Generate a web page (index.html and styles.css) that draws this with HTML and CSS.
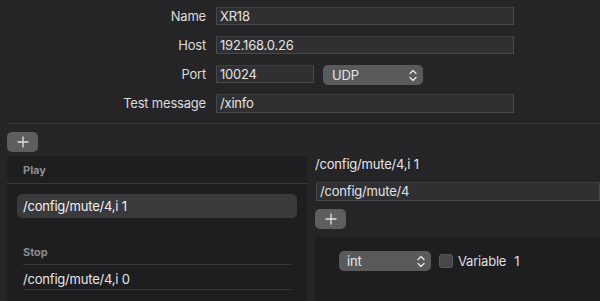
FILE: index.html
```html
<!DOCTYPE html>
<html>
<head>
<meta charset="utf-8">
<link rel="stylesheet" href="styles.css">
</head>
<body>
<div class="form">
  <label class="lbl">Name</label>
  <div class="field wide">XR18</div>
  <label class="lbl">Host</label>
  <div class="field wide">192.168.0.26</div>
  <label class="lbl">Port</label>
  <div class="port-row">
    <div class="field port">10024</div>
    <div class="popup udp"><span>UDP</span><svg class="chev" width="8" height="13" viewBox="0 0 8 13"><path d="M1 4.5 L4 1.5 L7 4.5 M1 8.5 L4 11.5 L7 8.5" fill="none" stroke="#e6e6e6" stroke-width="1.3" stroke-linecap="round" stroke-linejoin="round"/></svg></div>
  </div>
  <label class="lbl">Test message</label>
  <div class="field wide">/xinfo</div>
</div>
<div class="sep"></div>
<div class="add-wrap"><button class="add"><svg width="12" height="12" viewBox="0 0 12 12"><path d="M6 0.5 V11.5 M0.5 6 H11.5" stroke="#e2e2e2" stroke-width="1.3"/></svg></button></div>
<div class="main">
  <div class="list">
    <div class="head first">Play</div>
    <div class="row selected">/config/mute/4,i 1</div>
    <div class="head second">Stop</div>
    <div class="row plain">/config/mute/4,i 0</div>
  </div>
  <div class="detail">
    <div class="title">/config/mute/4,i 1</div>
    <div class="field addr">/config/mute/4</div>
    <div class="add-wrap2"><button class="add"><svg width="12" height="12" viewBox="0 0 12 12"><path d="M6 0.5 V11.5 M0.5 6 H11.5" stroke="#e2e2e2" stroke-width="1.3"/></svg></button></div>
    <div class="args">
      <div class="arg">
        <div class="popup int"><span>int</span><svg class="chev" width="8" height="13" viewBox="0 0 8 13"><path d="M1 4.5 L4 1.5 L7 4.5 M1 8.5 L4 11.5 L7 8.5" fill="none" stroke="#e6e6e6" stroke-width="1.3" stroke-linecap="round" stroke-linejoin="round"/></svg></div>
        <span class="check"></span>
        <span class="var">Variable</span>
        <span class="val">1</span>
      </div>
    </div>
  </div>
</div>
</body>
</html>
```
FILE: styles.css
```css
* { box-sizing: border-box; }
html, body { margin: 0; padding: 0; }
body {
  width: 600px;
  height: 301px;
  overflow: hidden;
  background: #252527;
  font-family: Inter, "Liberation Sans", sans-serif;
  font-size: 13px;
  letter-spacing: -0.2px;
  color: #dedee0;
}
.form {
  display: grid;
  grid-template-columns: 206px 298px;
  grid-auto-rows: 18px;
  column-gap: 10px;
  row-gap: 11px;
  padding-top: 7px;
}
.lbl {
  text-align: right;
  line-height: 19px;
  color: #dcdcde;
}
.field {
  height: 18px;
  background: #303032;
  border: 1px solid #4a4a4c;
  border-top-color: #3e3e40;
  padding: 0 3px;
  line-height: 16px;
  color: #e2e2e4;
  white-space: nowrap;
  overflow: hidden;
}
.form .field:last-child { height: 19px; }
.port-row {
  display: flex;
  align-items: flex-start;
  gap: 9px;
}
.field.port { width: 98px; }
.popup {
  display: flex;
  align-items: center;
  justify-content: space-between;
  height: 20px;
  border-radius: 5px;
  background: #5a5a5c;
  padding: 0 6px 0 9px;
  color: #e6e6e8;
}
.udp { width: 100px; }
.int { width: 92px; padding-left: 8px; }
.chev { display: block; }
.sep {
  margin: 11px 0 0 7px;
  border-top: 1px solid #3a3a3c;
}
.add-wrap { padding: 8px 0 0 7px; height: 32px; }
.add {
  display: flex;
  align-items: center;
  justify-content: center;
  width: 31px;
  height: 20px;
  border: none;
  border-radius: 5px;
  background: #5e5e60;
  padding: 0;
}
.main {
  display: flex;
  gap: 8px;
  padding-left: 7px;
  height: 145px;
}
.list {
  width: 300px;
  background: #1e1e20;
  display: flex;
  flex-direction: column;
}
.head {
  font-size: 11px;
  font-weight: 700;
  letter-spacing: 0;
  color: #8c8c8e;
}
.head.first {
  height: 28px;
  line-height: 28px;
  padding-left: 16px;
  border-bottom: 1px solid #38383a;
}
.row.selected {
  margin: 10px 10px 0;
  height: 24px;
  line-height: 24px;
  padding-left: 6px;
  border-radius: 5px;
  background: #3a3a3c;
  color: #f0f0f2;
}
.head.second {
  margin: 22px 16px 0;
  height: 25px;
  padding-top: 2px;
  line-height: 20px;
  border-bottom: 1px solid #3a3a3c;
}
.row.plain {
  margin: 0 16px;
  height: 25px;
  padding-top: 4px;
  line-height: 20px;
  border-bottom: 1px solid #3a3a3c;
  color: #e6e6e8;
}
.detail {
  flex: 1;
  display: flex;
  flex-direction: column;
}
.title {
  height: 26px;
  line-height: 17px;
  color: #e6e6e8;
}
.field.addr {
  margin-left: 1px;
  height: 19px;
  line-height: 17px;
}
.add-wrap2 { padding-top: 8px; height: 36px; }
.args {
  flex: 1;
  background: #1e1e20;
}
.arg {
  display: flex;
  align-items: center;
  padding: 14px 0 0 24px;
  height: 34px;
}
.check {
  width: 14px;
  height: 14px;
  margin-left: 8px;
  border-radius: 3px;
  background: #48484a;
  border: 1px solid #58585a;
}
.var { margin-left: 5px; color: #dedee0; }
.val { margin-left: 8px; color: #dedee0; }
```
